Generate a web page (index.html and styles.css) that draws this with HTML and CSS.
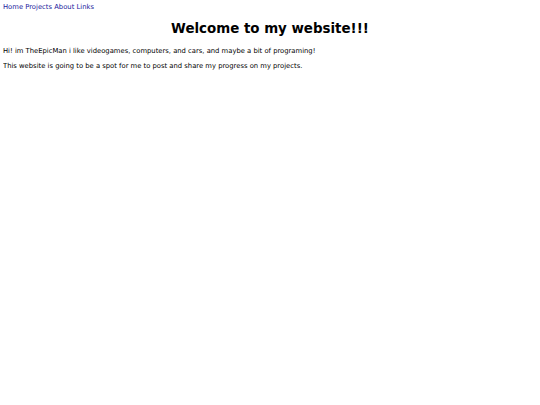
FILE: index.html
```
<!DOCTYPE html>
<html>
<head>
<meta charset="utf-8">
<link rel="stylesheet" href="styles.css">
</head>
<body>
<nav class="nav"><a href="#">Home</a> <a href="#">Projects</a> <a href="#">About</a> <a href="#">Links</a></nav>
<h1 class="title">Welcome to my website!!!</h1>
<p class="text">Hi! im TheEpicMan i like videogames, computers, and cars, and maybe a bit of programing!</p>
<p class="text">This website is going to be a spot for me to post and share my progress on my projects.</p>
</body>
</html>
```
FILE: styles.css
```
body {
  margin: 3px;
  font-family: "DejaVu Sans", Verdana, sans-serif;
  font-size: 6.8px;
  line-height: 8px;
  color: #000;
  background: #fff;
}
.nav a {
  color: #1a1a9c;
  text-decoration: none;
}
.title {
  text-align: center;
  font-size: 13.4px;
  line-height: 16px;
  font-weight: bold;
  margin: 10px 0 10px;
}
.text {
  margin: 0 0 7px;
}
```
